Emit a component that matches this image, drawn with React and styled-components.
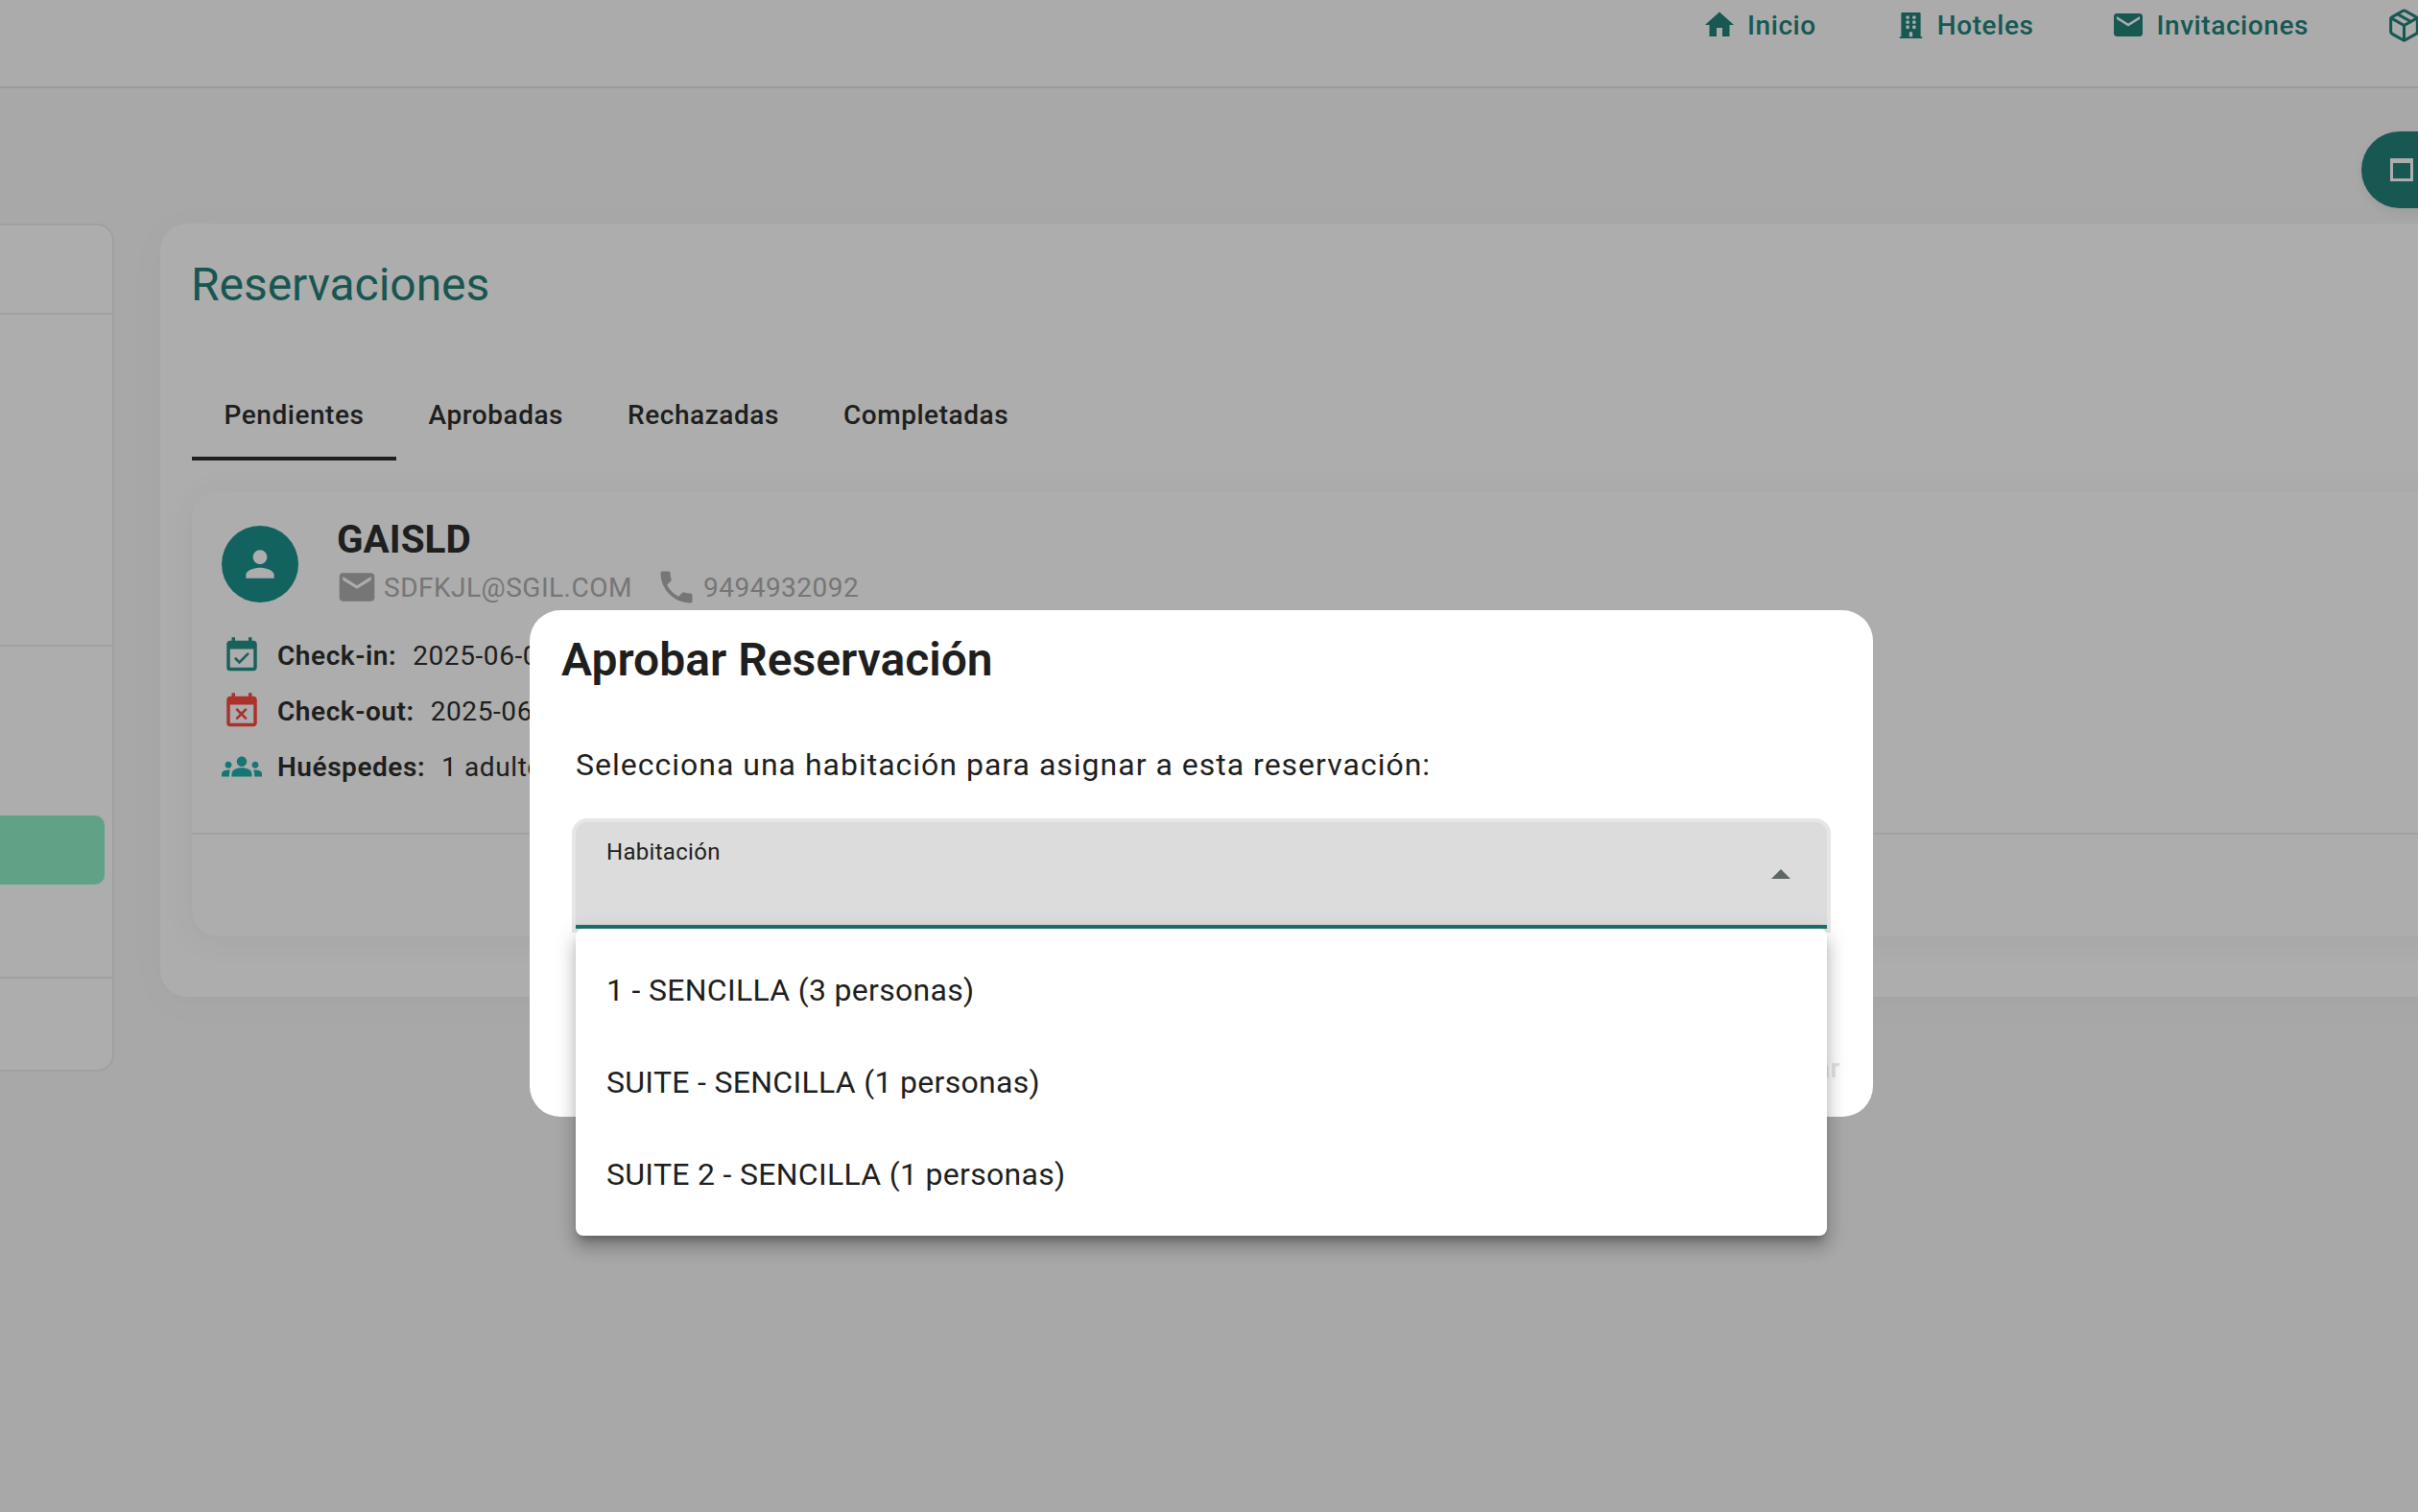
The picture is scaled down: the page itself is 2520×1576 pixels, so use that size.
import React from "react";
import styled, { createGlobalStyle } from "styled-components";
import { MdHome, MdEmail, MdPerson, MdPhone, MdEventAvailable, MdEventBusy, MdGroups, MdArrowDropUp } from "react-icons/md";
import { FaBuilding } from "react-icons/fa";
import { Package } from "lucide-react";

const GlobalStyle = createGlobalStyle`
  html, body {
    margin: 0;
    padding: 0;
    width: 2520px;
    height: 1576px;
    overflow: hidden;
    background: #f8f8f8;
    font-family: Roboto, "Liberation Sans", sans-serif;
  }
`;

const Page = styled.div`
  position: relative;
  width: 2520px;
  height: 1576px;
  overflow: hidden;
  background: #f8f8f8;
`;

const Header = styled.header`
  display: flex;
  align-items: flex-start;
  box-sizing: border-box;
  height: 92px;
  padding: 8px 0 0 1774px;
  background: #fcfcfc;
  border-bottom: 2px solid #e4e4e4;
`;

const NavItem = styled.a`
  display: flex;
  flex-shrink: 0;
  align-items: center;
  gap: ${(props) => props.gap || 11}px;
  margin-right: ${(props) => props.marginRight || 0}px;
  height: 36px;
  font-size: 28px;
  font-weight: 500;
  letter-spacing: 0.58px;
  color: #228279;
  white-space: nowrap;
`;

const Fab = styled.div`
  position: absolute;
  top: 137px;
  left: 2461px;
  display: flex;
  align-items: center;
  box-sizing: border-box;
  width: 120px;
  height: 80px;
  padding-left: 30px;
  border-radius: 40px;
  background: #228279;
  box-shadow: 0 4px 12px rgba(0, 0, 0, 0.08);
`;

const Content = styled.main`
  display: flex;
  align-items: flex-start;
  gap: 48px;
  padding-top: 141px;
`;

const Sidebar = styled.aside`
  flex-shrink: 0;
  box-sizing: border-box;
  width: 119px;
  height: 884px;
  background: #ffffff;
  border: 2px solid #ececec;
  border-left: none;
  border-radius: 0 18px 18px 0;
`;

const SideSection = styled.div`
  box-sizing: border-box;
  height: ${(props) => props.height}px;
  padding: ${(props) => props.paddingTop || 0}px 8px 0 0;
  border-bottom: ${(props) => (props.last ? "none" : "2px solid #ececec")};
`;

const GreenButton = styled.div`
  height: 72px;
  background: #8fefc7;
  border-radius: 0 10px 10px 0;
`;

const MainCard = styled.section`
  flex-shrink: 0;
  box-sizing: border-box;
  width: 2400px;
  height: 806px;
  padding: 34px 0 0 32px;
  background: #ffffff;
  border-radius: 28px;
  box-shadow: 0 6px 40px rgba(0, 0, 0, 0.03);
`;

const Title = styled.h1`
  margin: 0;
  height: 60px;
  font-size: 48px;
  font-weight: 400;
  line-height: 60px;
  letter-spacing: -0.05px;
  color: #237f78;
`;

const Tabs = styled.div`
  display: flex;
  margin-top: 57px;
  margin-left: 1px;
`;

const Tab = styled.div`
  display: flex;
  align-items: center;
  box-sizing: border-box;
  height: 96px;
  padding: 0 33.5px;
  font-size: 28px;
  font-weight: 500;
  letter-spacing: 0.55px;
  color: #2e2e2e;
  box-shadow: ${(props) => (props.active ? "inset 0 -4px 0 #2e2e2e" : "none")};
`;

const ReservationCard = styled.article`
  box-sizing: border-box;
  height: 464px;
  margin: 32px 0 0 1px;
  background: #ffffff;
  border-radius: 28px;
  box-shadow: 0 4px 36px rgba(0, 0, 0, 0.05);
`;

const CardBody = styled.div`
  box-sizing: border-box;
  height: 358px;
  padding: 27px 0 0 31px;
  border-bottom: 2px solid #efefef;
`;

const GuestRow = styled.div`
  display: flex;
  gap: 40px;
`;

const Avatar = styled.div`
  display: flex;
  align-items: center;
  justify-content: center;
  flex-shrink: 0;
  width: 80px;
  height: 80px;
  margin-top: 9px;
  border-radius: 50%;
  background: #1b918e;
  color: #ffffff;
`;

const GuestName = styled.div`
  height: 46px;
  margin-bottom: 5px;
  font-size: 40.5px;
  font-weight: 700;
  line-height: 46px;
  color: #2e2e2e;
`;

const Contact = styled.div`
  display: flex;
  align-items: center;
  height: 44px;
  margin-left: -1px;
  font-size: 28px;
  letter-spacing: 0.5px;
  color: #afafaf;
`;

const ContactText = styled.span`
  margin-left: 6px;
  margin-right: ${(props) => props.marginRight || 0}px;
`;

const Facts = styled.div`
  margin-top: 20px;
`;

const Fact = styled.div`
  display: flex;
  align-items: center;
  gap: 16px;
  height: 58px;
  font-size: 28px;
  letter-spacing: 0.6px;
  color: #2e2e2e;
  white-space: nowrap;
`;

const FactIcon = styled.span`
  display: flex;
  justify-content: center;
  width: 42px;
  color: ${(props) => props.color};
`;

const FactLabel = styled.strong`
  margin-right: 17px;
  font-weight: 600;
  letter-spacing: 0.55px;
`;

const Overlay = styled.div`
  position: absolute;
  inset: 0;
  display: flex;
  align-items: flex-start;
  justify-content: center;
  box-sizing: border-box;
  padding: 636px 16px 0 0;
  background: rgba(0, 0, 0, 0.32);
`;

const Dialog = styled.div`
  display: flex;
  flex-direction: column;
  box-sizing: border-box;
  width: 1400px;
  height: 528px;
  padding-top: 20px;
  background: #ffffff;
  border-radius: 32px;
`;

const DialogTitle = styled.h2`
  margin: 0;
  padding-left: 33px;
  height: 64px;
  font-size: 48px;
  font-weight: 600;
  line-height: 64px;
  color: #1f1f1f;
`;

const Prompt = styled.p`
  margin: 53px 0 0;
  padding-left: 48px;
  height: 48px;
  font-size: 32px;
  line-height: 48px;
  letter-spacing: 1px;
  color: #1f1f1f;
`;

const SelectField = styled.div`
  position: relative;
  display: flex;
  justify-content: space-between;
  box-sizing: border-box;
  height: 111px;
  margin: 36px 48px 0;
  padding: 20px 24px 0 32px;
  background: #dcdcdc;
  border-bottom: 4px solid #187370;
  border-radius: 12px 12px 0 0;
  box-shadow: 0 0 0 4px #e6e6e6;
`;

const FieldLabel = styled.span`
  font-size: 24px;
  line-height: 22px;
  letter-spacing: 0.3px;
  color: #222222;
`;

const FieldArrow = styled.span`
  display: flex;
  margin-top: 11px;
  height: 48px;
  color: #5f6666;
`;

const Menu = styled.ul`
  position: absolute;
  top: 111px;
  left: 0;
  right: 0;
  margin: 0;
  padding: 16px 0;
  list-style: none;
  background: #ffffff;
  border-radius: 8px;
  box-shadow: 0 8px 8px -5px rgba(0, 0, 0, 0.3), 0 13px 16px 2px rgba(0, 0, 0, 0.14),
    0 5px 22px 3px rgba(0, 0, 0, 0.12);
  z-index: 2;
`;

const MenuItem = styled.li`
  display: flex;
  align-items: center;
  height: 96px;
  padding-left: 32px;
  font-size: 32px;
  letter-spacing: 0.3px;
  color: #1f1f1f;
`;

const Actions = styled.div`
  display: flex;
  justify-content: flex-end;
  gap: 32px;
  margin-top: auto;
  padding: 0 34px 30px 0;
  font-size: 28px;
  font-weight: 500;
  line-height: 40px;
  letter-spacing: 0.58px;
  color: #e2e2e2;
`;

const WindowIcon = () => (
  <svg width="24" height="24" viewBox="0 0 24 24" fill="#ffffff">
    <path fillRule="evenodd" d="M0 0h24v24H0z M3 5v16h18V5z" />
  </svg>
);

const App = () => {
  return (
    <Page>
      <GlobalStyle />
      <Header>
        <NavItem marginRight={85}>
          <MdHome size={36} />
          Inicio
        </NavItem>
        <NavItem gap={14} marginRight={81}>
          <FaBuilding size={27} />
          Hoteles
        </NavItem>
        <NavItem marginRight={81}>
          <MdEmail size={36} />
          Invitaciones
        </NavItem>
        <NavItem>
          <Package size={37} strokeWidth={2} />
        </NavItem>
      </Header>
      <Fab>
        <WindowIcon />
      </Fab>
      <Content>
        <Sidebar>
          <SideSection height={93} />
          <SideSection height={346} />
          <SideSection height={346} paddingTop={176}>
            <GreenButton />
          </SideSection>
          <SideSection height={97} last />
        </Sidebar>
        <MainCard>
          <Title>Reservaciones</Title>
          <Tabs>
            <Tab active>Pendientes</Tab>
            <Tab>Aprobadas</Tab>
            <Tab>Rechazadas</Tab>
            <Tab>Completadas</Tab>
          </Tabs>
          <ReservationCard>
            <CardBody>
              <GuestRow>
                <Avatar>
                  <MdPerson size={44} />
                </Avatar>
                <div>
                  <GuestName>GAISLD</GuestName>
                  <Contact>
                    <MdEmail size={44} />
                    <ContactText marginRight={24}>SDFKJL@SGIL.COM</ContactText>
                    <MdPhone size={44} />
                    <ContactText>9494932092</ContactText>
                  </Contact>
                </div>
              </GuestRow>
              <Facts>
                <Fact>
                  <FactIcon color="#268f88">
                    <MdEventAvailable size={43} />
                  </FactIcon>
                  <span>
                    <FactLabel>Check-in:</FactLabel>2025-06-05
                  </span>
                </Fact>
                <Fact>
                  <FactIcon color="#fc493f">
                    <MdEventBusy size={43} />
                  </FactIcon>
                  <span>
                    <FactLabel>Check-out:</FactLabel>2025-06-07
                  </span>
                </Fact>
                <Fact>
                  <FactIcon color="#1fb0ac">
                    <MdGroups size={44} />
                  </FactIcon>
                  <span>
                    <FactLabel>Huéspedes:</FactLabel>1 adulto
                  </span>
                </Fact>
              </Facts>
            </CardBody>
          </ReservationCard>
        </MainCard>
      </Content>
      <Overlay>
        <Dialog>
          <DialogTitle>Aprobar Reservación</DialogTitle>
          <Prompt>Selecciona una habitación para asignar a esta reservación:</Prompt>
          <SelectField>
            <FieldLabel>Habitación</FieldLabel>
            <FieldArrow>
              <MdArrowDropUp size={48} />
            </FieldArrow>
            <Menu>
              <MenuItem>1 - SENCILLA (3 personas)</MenuItem>
              <MenuItem>SUITE - SENCILLA (1 personas)</MenuItem>
              <MenuItem>SUITE 2 - SENCILLA (1 personas)</MenuItem>
            </Menu>
          </SelectField>
          <Actions>
            <span>Cancelar</span>
            <span>Aprobar</span>
          </Actions>
        </Dialog>
      </Overlay>
    </Page>
  );
};

export default App;
